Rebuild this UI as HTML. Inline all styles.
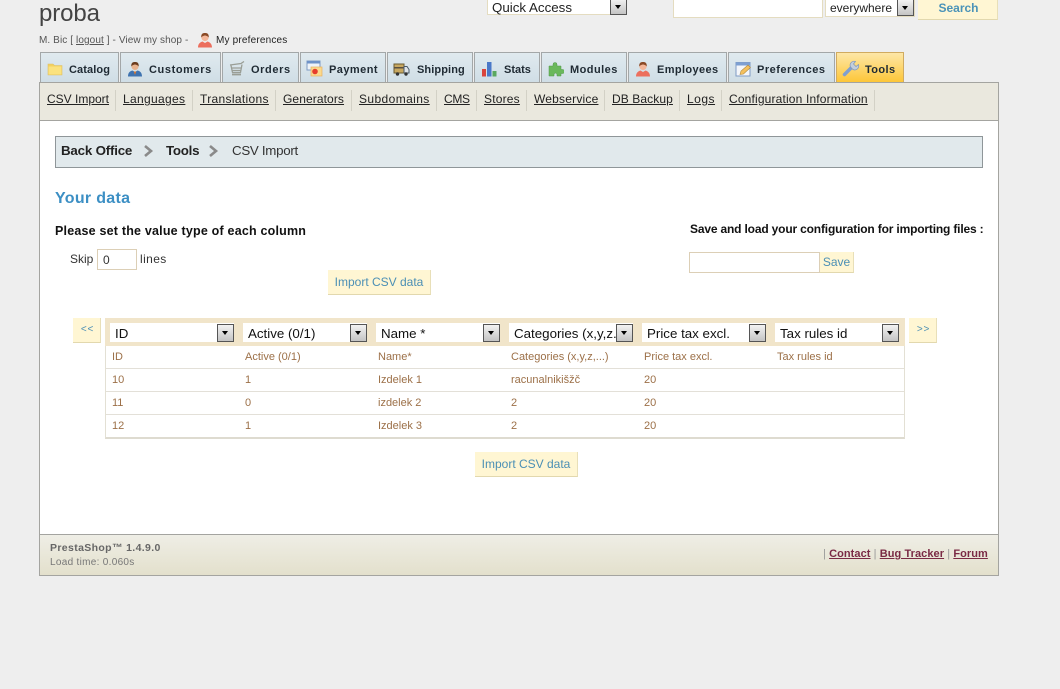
<!DOCTYPE html>
<html><head><meta charset="utf-8"><title>proba</title>
<style>
html,body{margin:0;padding:0;width:1060px;height:689px;overflow:hidden;background:#eee}
body{position:relative;font-family:"Liberation Sans",Arial,sans-serif;color:#000}
.a{position:absolute;box-sizing:border-box}
.t{position:absolute;white-space:nowrap;height:16px;line-height:16px}
.tab{position:absolute;top:52px;height:31px;box-sizing:border-box;border:1px solid #a3a7a8;border-bottom:0;background:linear-gradient(#e0eaef,#cfdde5)}
.tab.on{background:linear-gradient(#fde7a8,#fdc534);border-color:#d0ab60}
.tl{position:absolute;top:62px;white-space:nowrap;height:16px;line-height:16px;font-size:11px;font-weight:bold;letter-spacing:.6px;color:#1f2a33}
.ic{position:absolute}
.sm{position:absolute;top:91px;height:16px;line-height:16px;font-size:12px;color:#222;text-decoration:underline;white-space:nowrap}
.sep{position:absolute;top:90px;width:1px;height:21px;background:#d3d1c6}
.btn{position:absolute;box-sizing:border-box;background:#fff6d3;border-right:1px solid #e8dfb8;border-bottom:1px solid #e2d8ae;color:#4b8fb5;text-align:center;font-size:12px}
.sel{position:absolute;box-sizing:border-box;top:323px;height:19px;width:124px;background:#fff;font-size:13.33px;line-height:21px;padding-left:5px;color:#111;white-space:nowrap;overflow:hidden}
.arr{position:absolute;box-sizing:border-box;width:17px;height:18px;border:1px solid #555;background:linear-gradient(#f2f2f2,#c4c4c4)}
.arr:after{content:"";position:absolute;left:4px;top:6px;border:3.5px solid transparent;border-top:4px solid #000;border-bottom:0}
.c{position:absolute;white-space:nowrap;font-size:11px;height:14px;line-height:14px;color:#9c7048}
.ln{position:absolute;left:106px;width:798px;height:1px;background:#e3e0d8}
</style></head><body>
<svg width="0" height="0" style="position:absolute"><defs>
<symbol id="person" viewBox="0 0 16 16"><path d="M1 15.500C1 11.500 3.500 10 5.500 9.500L8 11l2.500-1.500C12.500 10 15 11.500 15 15.500Z" fill="#ec6f5e"/><circle cx="8" cy="5.500" r="3.600" fill="#f4b79a"/><path d="M4.200 5.500C4 1.500 6 1 8 1s4 .5 3.800 4.500C10.500 4 9 3.500 8 3.500S5.500 4 4.200 5.500Z" fill="#8a4a26"/></symbol>
</defs></svg>

<div class="t" style="left:39px;top:0;height:28px;line-height:28px;font-size:24px;color:#444;letter-spacing:-.1px">proba</div>
<div class="t" style="left:39px;top:33px;font-size:10px;color:#555;letter-spacing:.1px">M. Bic [ <u>logout</u> ] - View my shop -</div>
<svg class="ic" style="left:197px;top:32px" width="16" height="16"><use href="#person"/></svg>
<div class="t" style="left:216px;top:33px;font-size:10px;color:#222;letter-spacing:.18px">My preferences</div>

<!-- top controls -->
<div class="a" style="left:487px;top:-4px;width:140px;height:19px;background:#fff;border:1px solid #e4dcc0;font-size:13.33px;line-height:21px;padding-left:4px;color:#222">Quick Access</div>
<div class="arr" style="left:610px;top:-2px;height:17px"></div>
<div class="a" style="left:673px;top:-3px;width:150px;height:21px;background:#fff;border:1px solid #e4dcc0"></div>
<div class="a" style="left:825px;top:-3px;width:90px;height:20px;background:#fff;border:1px solid #e4dcc0;font-size:12px;line-height:21px;padding-left:4px;color:#222">everywhere</div>
<div class="arr" style="left:897px;top:-1px;height:17px"></div>
<div class="btn" style="left:918px;top:-4px;width:80px;height:24px;line-height:24px;font-weight:bold;color:#4b93b8;padding-left:2px">Search</div>

<!-- tabs -->
<div class="tab" style="left:40px;width:79px"></div>
<div class="tab" style="left:120px;width:101px"></div>
<div class="tab" style="left:222px;width:77px"></div>
<div class="tab" style="left:300px;width:86px"></div>
<div class="tab" style="left:387px;width:86px"></div>
<div class="tab" style="left:474px;width:66px"></div>
<div class="tab" style="left:541px;width:86px"></div>
<div class="tab" style="left:628px;width:99px"></div>
<div class="tab" style="left:728px;width:107px"></div>
<div class="tab on" style="left:836px;width:68px"></div>

<svg class="ic" style="left:47px;top:61px" width="16" height="16"><path d="M1 3h5l1.500 1.500H15V14H1Z" fill="#f3d15f" stroke="#dcc06a" stroke-width=".6"/><rect x="1.500" y="5.500" width="13" height="8" fill="#fbe27e"/></svg>
<svg class="ic" style="left:127px;top:61px" width="16" height="16"><path d="M1 15.500C1 11.500 3 10 5.500 9.500L8 11l2.500-1.500C13 10 15 11.500 15 15.500Z" fill="#3f73b0"/><circle cx="8" cy="5.500" r="3.500" fill="#e8b38e"/><path d="M4.300 5.500C4 1.500 6 1 8 1s4 .5 3.700 4.500C10.500 4 9 3.500 8 3.500S5.500 4 4.300 5.500Z" fill="#6b3d1f"/><path d="M6.700 10.500h2.600L8 14Z" fill="#d9772f"/></svg>
<svg class="ic" style="left:229px;top:61px" width="16" height="16" fill="none" stroke="#9a9e96" stroke-width="1.300"><path d="M1 4l11-1.500 3-2"/><path d="M2 4.500l1.500 7h8L13 3.500"/><path d="M2.500 7h10M3 9.500h9"/><path d="M3 13.500h9" stroke-width="1.800"/></svg>
<svg class="ic" style="left:306px;top:60px" width="17" height="17"><rect x="1" y="1" width="13" height="9" fill="#eef3f8" stroke="#7f9bc4"/><rect x="1" y="1" width="13" height="2.500" fill="#6e92c8"/><rect x="5" y="7" width="11" height="9" fill="#fbd98c" stroke="#e8b060" stroke-width=".7"/><circle cx="9" cy="11.500" r="2.800" fill="#e63b2c"/></svg>
<svg class="ic" style="left:393px;top:61px" width="17" height="16"><rect x="1" y="3" width="10" height="9" fill="#c8a860" stroke="#6a5a30"/><rect x="1" y="6" width="10" height="1.500" fill="#5a5040"/><path d="M11 5.500h3l2 3V12h-5Z" fill="#dfe4e8" stroke="#4a5a6a"/><circle cx="4.500" cy="13" r="1.700" fill="#333"/><circle cx="13" cy="13" r="1.700" fill="#333"/></svg>
<svg class="ic" style="left:481px;top:61px" width="16" height="16"><rect x="1" y="8" width="4" height="7.500" fill="#d9443c"/><rect x="6" y="1" width="4.500" height="14.500" fill="#4a78c8"/><rect x="11.500" y="10" width="4" height="5.500" fill="#5aa860"/></svg>
<svg class="ic" style="left:548px;top:61px" width="16" height="16"><path d="M1 5h4V3.500a2 2 0 0 1 4 0V5h4v3.500h1.500a2 2 0 0 1 0 4H13V15H9v-1.500a1.500 1.500 0 0 0-3 0V15H1Z" fill="#6ab85c" stroke="#4f9646" stroke-width=".5"/></svg>
<svg class="ic" style="left:635px;top:61px" width="16" height="16"><use href="#person"/></svg>
<svg class="ic" style="left:735px;top:61px" width="17" height="17"><rect x="1" y="1.500" width="14" height="13.500" fill="#f4f6fa" stroke="#7f9bc4"/><rect x="1" y="1.500" width="14" height="3" fill="#7d9fd2"/><path d="M5 13.500l1-3.500 7-6 2.500 2.500-7 6.500Z" fill="#f4c05e" stroke="#b08a3e" stroke-width=".6"/></svg>
<svg class="ic" style="left:842px;top:60px" width="18" height="18"><path d="M2.500 14.500L10 7" stroke="#7f9fd0" stroke-width="3.500" stroke-linecap="round"/><path d="M8.500 7a4 4 0 0 1 5-5.500l-2 2.500 2.500 2.500 2.500-2a4 4 0 0 1-5.500 5Z" fill="#c3cedc" stroke="#7f96b6" stroke-width=".7"/></svg>

<div class="tl" style="left:69px;letter-spacing:.1px">Catalog</div>
<div class="tl" style="left:149px">Customers</div>
<div class="tl" style="left:251px">Orders</div>
<div class="tl" style="left:329px;letter-spacing:.45px">Payment</div>
<div class="tl" style="left:417px;letter-spacing:.1px">Shipping</div>
<div class="tl" style="left:504px;letter-spacing:0">Stats</div>
<div class="tl" style="left:570px;letter-spacing:.45px">Modules</div>
<div class="tl" style="left:657px;letter-spacing:.38px">Employees</div>
<div class="tl" style="left:757px;letter-spacing:.5px">Preferences</div>
<div class="tl" style="left:865px;letter-spacing:.4px">Tools</div>

<!-- submenu -->
<div class="a" style="left:39px;top:82px;width:960px;height:39px;background:#eae8de;border:1px solid #a4a4a0"></div>
<a class="sm" style="left:47px">CSV Import</a><div class="sep" style="left:115px"></div>
<a class="sm" style="left:123px;letter-spacing:.33px">Languages</a><div class="sep" style="left:192px"></div>
<a class="sm" style="left:200px;letter-spacing:.33px">Translations</a><div class="sep" style="left:275px"></div>
<a class="sm" style="left:283px;letter-spacing:.1px">Generators</a><div class="sep" style="left:351px"></div>
<a class="sm" style="left:359px;letter-spacing:.4px">Subdomains</a><div class="sep" style="left:436px"></div>
<a class="sm" style="left:444px;letter-spacing:-.3px">CMS</a><div class="sep" style="left:476px"></div>
<a class="sm" style="left:484px;letter-spacing:.2px">Stores</a><div class="sep" style="left:526px"></div>
<a class="sm" style="left:534px;letter-spacing:.2px">Webservice</a><div class="sep" style="left:604px"></div>
<a class="sm" style="left:612px;letter-spacing:.1px">DB Backup</a><div class="sep" style="left:679px"></div>
<a class="sm" style="left:687px;letter-spacing:.5px">Logs</a><div class="sep" style="left:721px"></div>
<a class="sm" style="left:729px;letter-spacing:.16px">Configuration Information</a><div class="sep" style="left:874px"></div>

<!-- content -->
<div class="a" style="left:39px;top:120px;width:960px;height:415px;background:#fff;border:1px solid #a4a4a0"></div>

<div class="a" style="left:55px;top:136px;width:928px;height:32px;background:#e1e9ec;border:1px solid #8f9699"></div>
<div class="t" style="left:61px;top:143px;font-size:13.33px;font-weight:bold;color:#222;letter-spacing:-.2px">Back Office</div>
<svg class="ic" style="left:143px;top:144px" width="12" height="14" fill="none" stroke="#8a8a8a" stroke-width="2.600"><path d="M2 2l6 5-6 5"/></svg>
<div class="t" style="left:166px;top:143px;font-size:13.33px;font-weight:bold;color:#222;letter-spacing:-.25px">Tools</div>
<svg class="ic" style="left:208px;top:144px" width="12" height="14" fill="none" stroke="#8a8a8a" stroke-width="2.600"><path d="M2 2l6 5-6 5"/></svg>
<div class="t" style="left:232px;top:143px;font-size:13.33px;color:#333;letter-spacing:-.3px">CSV Import</div>

<div class="t" style="left:55px;top:189px;height:20px;line-height:20px;font-size:16px;font-weight:bold;color:#3c8fc4;letter-spacing:.3px">Your data</div>
<div class="t" style="left:55px;top:223px;font-size:12.5px;font-weight:bold;color:#111;letter-spacing:.2px">Please set the value type of each column</div>
<div class="t" style="left:690px;top:221px;font-size:12px;font-weight:bold;color:#111;letter-spacing:-.17px">Save and load your configuration for importing files :</div>

<div class="t" style="left:70px;top:251px;font-size:12px;color:#333">Skip</div>
<div class="a" style="left:97px;top:249px;width:40px;height:21px;border:1px solid #dccfb6;background:#fff;font-size:12px;line-height:20px;padding-left:5px;color:#333">0</div>
<div class="t" style="left:140px;top:251px;font-size:12px;color:#333;letter-spacing:.4px">lines</div>

<div class="a" style="left:689px;top:252px;width:131px;height:21px;border:1px solid #dccfb6;background:#fff"></div>
<div class="btn" style="left:820px;top:252px;width:34px;height:21px;line-height:21px">Save</div>
<div class="btn" style="left:328px;top:270px;width:103px;height:25px;line-height:25px">Import CSV data</div>

<div class="btn" style="left:73px;top:318px;width:28px;height:25px;line-height:24px;font-size:10px;letter-spacing:.8px;padding-left:2px">&lt;&lt;</div>
<div class="btn" style="left:909px;top:318px;width:28px;height:25px;line-height:24px;font-size:10px;letter-spacing:.8px;padding-left:2px">&gt;&gt;</div>

<!-- table -->
<div class="a" style="left:105px;top:318px;width:800px;height:121px;border:1px solid #e3e0d4;border-bottom:2px solid #dedbd0;background:#fff"></div>
<div class="a" style="left:105px;top:318px;width:800px;height:28px;background:#f1e5ca"></div>

<div class="sel" style="left:110px">ID</div><div class="arr" style="left:217px;top:324px"></div>
<div class="sel" style="left:243px">Active (0/1)</div><div class="arr" style="left:350px;top:324px"></div>
<div class="sel" style="left:376px">Name *</div><div class="arr" style="left:483px;top:324px"></div>
<div class="sel" style="left:509px;width:107px">Categories (x,y,z.</div><div class="a" style="left:616px;top:323px;width:17px;height:19px;background:#fff"></div><div class="arr" style="left:616px;top:324px"></div>
<div class="sel" style="left:642px">Price tax excl.</div><div class="arr" style="left:749px;top:324px"></div>
<div class="sel" style="left:775px">Tax rules id</div><div class="arr" style="left:882px;top:324px"></div>

<div class="ln" style="top:368px"></div><div class="ln" style="top:391px"></div><div class="ln" style="top:414px"></div>

<div class="c" style="left:112px;top:350px">ID</div><div class="c" style="left:245px;top:350px">Active (0/1)</div><div class="c" style="left:378px;top:350px">Name*</div><div class="c" style="left:511px;top:350px">Categories (x,y,z,...)</div><div class="c" style="left:644px;top:350px">Price tax excl.</div><div class="c" style="left:777px;top:350px">Tax rules id</div>
<div class="c" style="left:112px;top:373px">10</div><div class="c" style="left:245px;top:373px">1</div><div class="c" style="left:378px;top:373px">Izdelek 1</div><div class="c" style="left:511px;top:373px">racunalnikišžč</div><div class="c" style="left:644px;top:373px">20</div>
<div class="c" style="left:112px;top:396px">11</div><div class="c" style="left:245px;top:396px">0</div><div class="c" style="left:378px;top:396px">izdelek 2</div><div class="c" style="left:511px;top:396px">2</div><div class="c" style="left:644px;top:396px">20</div>
<div class="c" style="left:112px;top:419px">12</div><div class="c" style="left:245px;top:419px">1</div><div class="c" style="left:378px;top:419px">Izdelek 3</div><div class="c" style="left:511px;top:419px">2</div><div class="c" style="left:644px;top:419px">20</div>

<div class="btn" style="left:475px;top:452px;width:103px;height:25px;line-height:25px">Import CSV data</div>

<!-- footer -->
<div class="a" style="left:39px;top:534px;width:960px;height:42px;background:linear-gradient(#efeee6,#e3e0cc);border:1px solid #a4a4a0"></div>
<div class="t" style="left:50px;top:540px;font-size:10.5px;font-weight:bold;color:#666;letter-spacing:.36px">PrestaShop™ 1.4.9.0</div>
<div class="t" style="left:50px;top:555px;font-size:10px;color:#777;letter-spacing:.3px">Load time: 0.060s</div>
<div class="t" style="left:823px;top:546px;font-size:11px;font-weight:bold;color:#7a2a45;letter-spacing:.07px"><span style="color:#999;font-weight:normal">|</span> <u>Contact</u> <span style="color:#999;font-weight:normal">|</span> <u>Bug Tracker</u> <span style="color:#999;font-weight:normal">|</span> <u>Forum</u></div>
</body></html>
